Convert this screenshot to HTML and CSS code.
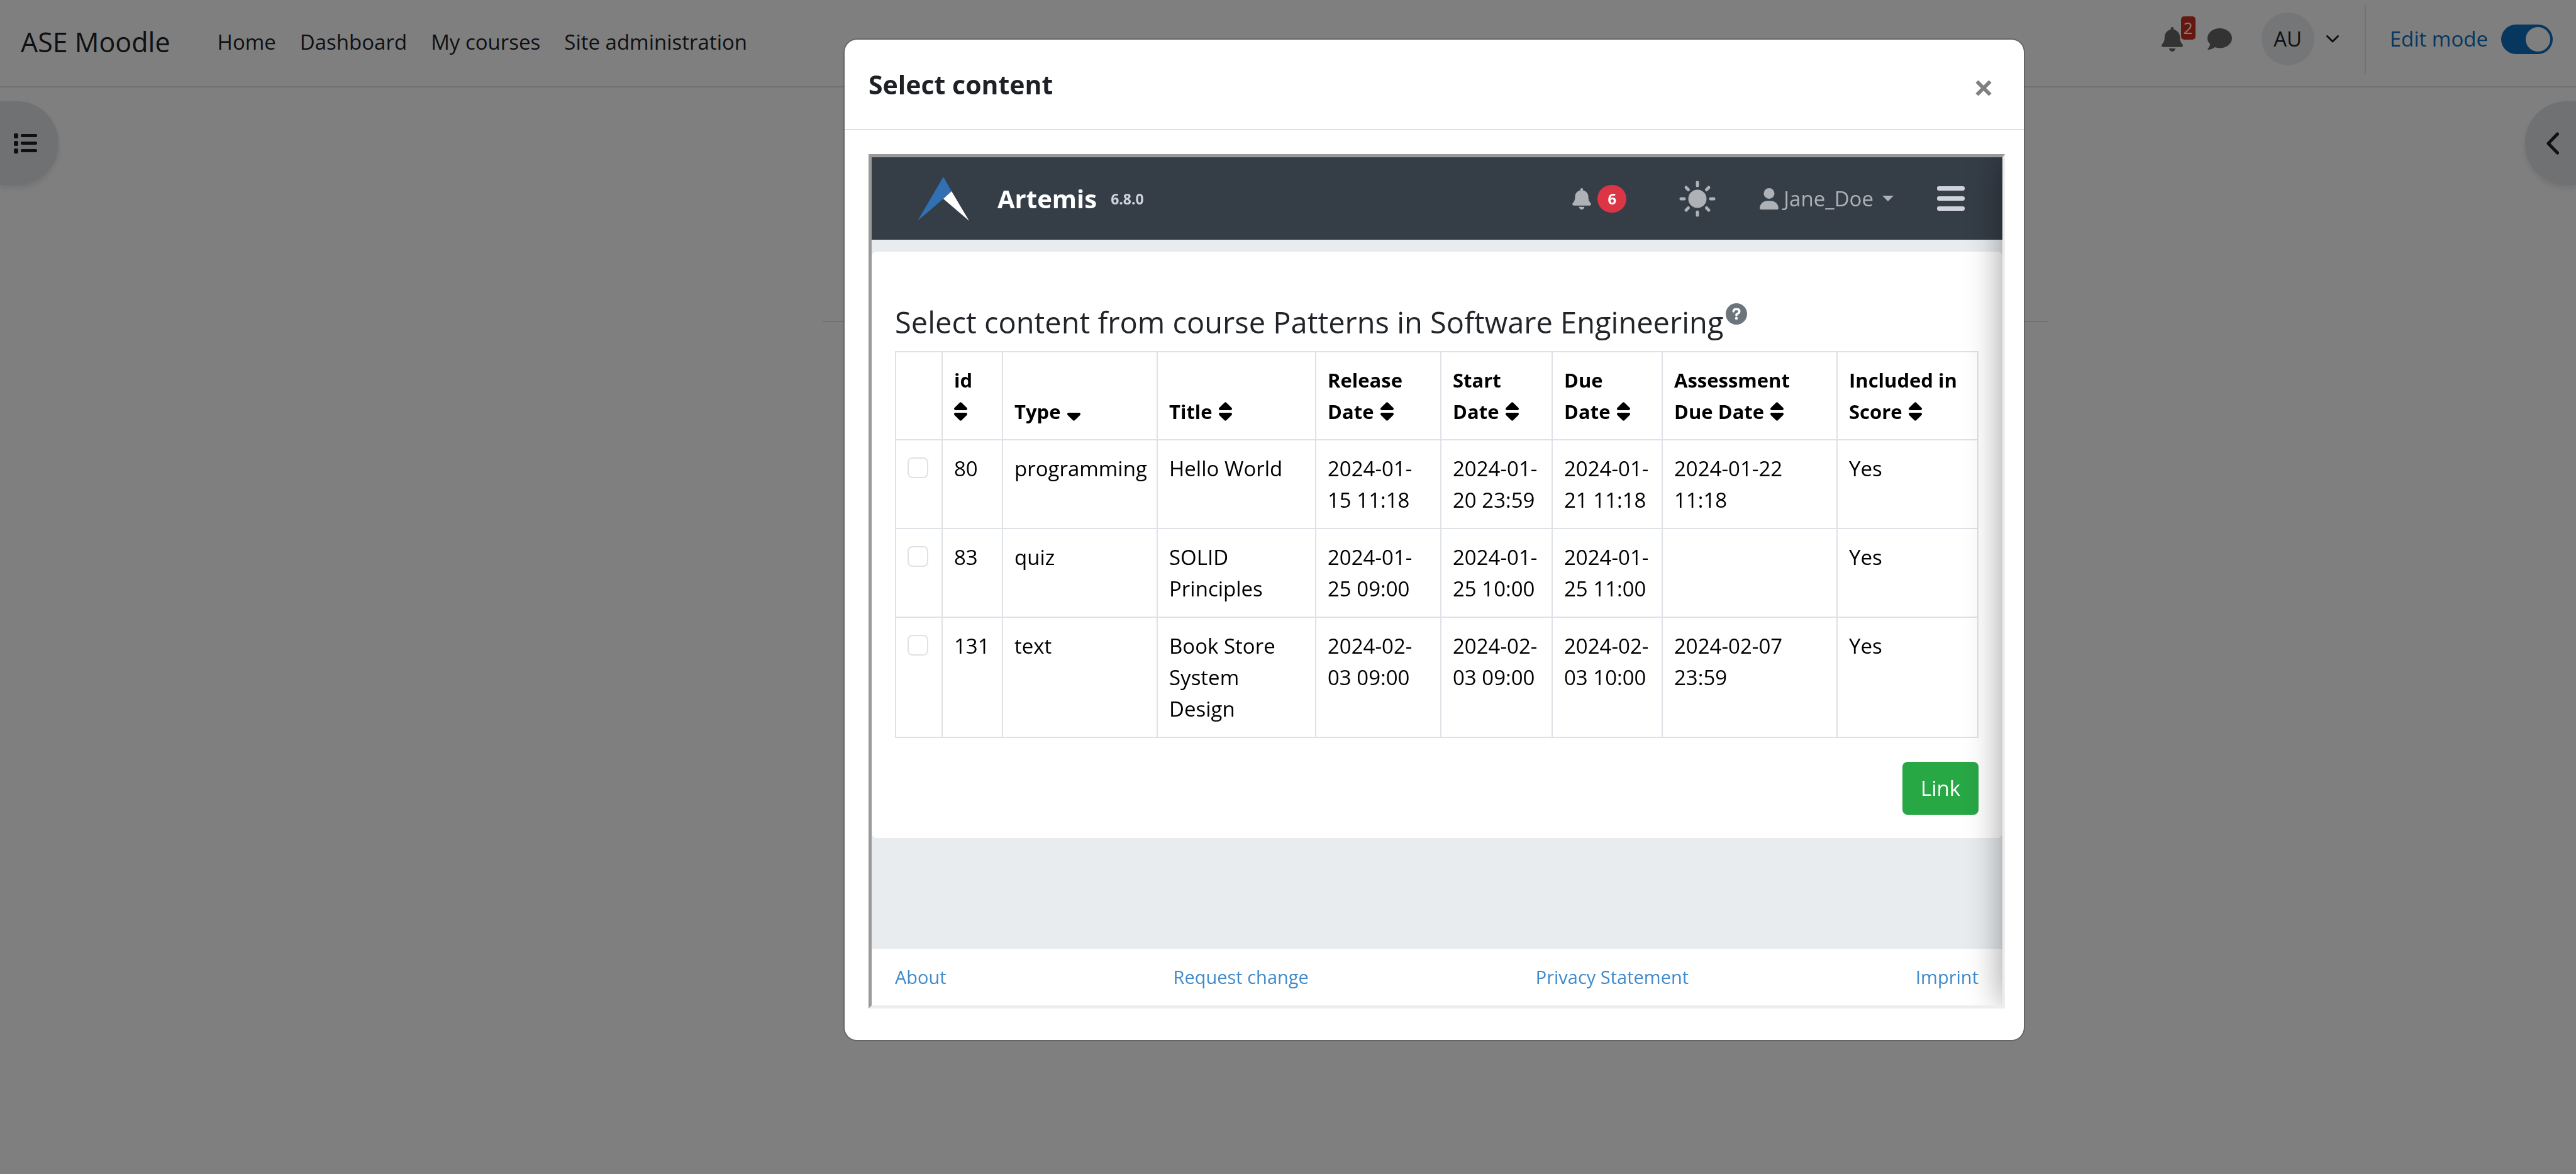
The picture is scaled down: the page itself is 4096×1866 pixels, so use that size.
FILE: index.html
```html
<!DOCTYPE html>
<html lang="en">
<head>
<meta charset="utf-8">
<title>ASE Moodle</title>
<meta name="viewport" content="width=device-width, initial-scale=1">
<link rel="stylesheet" href="styles.css">
</head>
<body>
<svg width="0" height="0" class="sprite" aria-hidden="true">
  <symbol id="sort" viewBox="0 0 320 512"><path d="M137.4 41.4c12.5-12.5 32.8-12.5 45.3 0l128 128c9.2 9.2 11.9 22.9 6.9 34.9s-16.6 19.8-29.6 19.8H32c-12.9 0-24.6-7.8-29.6-19.8s-2.2-25.7 6.9-34.9l128-128zm0 429.3l-128-128c-9.2-9.2-11.9-22.9-6.9-34.9s16.6-19.8 29.6-19.8H288c12.9 0 24.6 7.8 29.6 19.8s2.2 25.7-6.9 34.9l-128 128c-12.5 12.5-32.8 12.5-45.3 0z"/></symbol>
  <symbol id="sort-down" viewBox="0 0 320 512"><path d="M137.4 470.7l-128-128c-9.2-9.2-11.9-22.9-6.9-34.9s16.6-19.8 29.6-19.8H288c12.9 0 24.6 7.8 29.6 19.8s2.2 25.7-6.9 34.9l-128 128c-12.5 12.5-32.8 12.5-45.3 0z"/></symbol>
  <symbol id="bell" viewBox="0 0 448 512"><path d="M224 0c-17.7 0-32 14.300-32 32v19.200C119 66 64 130.600 64 208v18.800c0 47-17.300 92.400-48.500 127.600l-7.400 8.300c-8.400 9.400-10.400 22.900-5.300 34.400S19.400 416 32 416h384c12.600 0 24-7.400 29.200-18.900s3.100-25-5.300-34.400l-7.400-8.300C401.300 319.200 384 273.900 384 226.800V208c0-77.400-55-142-128-156.800V32c0-17.700-14.300-32-32-32zm45.300 493.300c12-12 18.700-28.300 18.700-45.300H160c0 17 6.700 33.300 18.700 45.300S207 512 224 512s33.300-6.700 45.300-18.700z"/></symbol>
</svg>

<header class="topbar">
  <div class="topbar-left">
    <a class="site-name" href="#">ASE Moodle</a>
    <nav class="site-nav">
      <a href="#">Home</a>
      <a href="#">Dashboard</a>
      <a href="#">My courses</a>
      <a href="#">Site administration</a>
    </nav>
  </div>
  <div class="topbar-right">
    <button class="icon-button alerts" type="button" aria-label="Notifications">
      <svg width="34" height="39"><use href="#bell"/></svg>
      <span class="count">2</span>
    </button>
    <button class="icon-button messages" type="button" aria-label="Messages">
      <svg width="39" height="34" viewBox="0 0 39 34"><path d="M19.500 0C30.300 0 39 7 39 15.800S30.300 31.500 19.500 31.500c-2.800 0-5.500-.5-7.900-1.400C9 32.200 5.500 33.800 1.200 34 .2 34 0 33.200.6 32.500 2.400 30.500 3.900 28 4.200 25.300 1.600 22.700 0 19.400 0 15.800 0 7 8.700 0 19.500 0z"/></svg>
    </button>
    <button class="icon-button user" type="button" aria-label="User menu">
      <span class="avatar">AU</span>
      <svg width="20" height="12" viewBox="0 0 20 12"><path class="stroke" d="M1.500 1.500L10 10l8.500-8.500"/></svg>
    </button>
    <label class="edit-mode">Edit mode <input class="switch" type="checkbox" checked></label>
  </div>
</header>

<main class="page">
  <button class="drawer drawer-left" type="button" aria-label="Open course index">
    <svg width="37" height="32" viewBox="0 0 37 32"><g><rect x="0" y="0" width="7" height="8" rx="2"/><rect x="0" y="12" width="7" height="8" rx="2"/><rect x="0" y="24" width="7" height="8" rx="2"/><rect x="11" y="1" width="26" height="5" rx="2"/><rect x="11" y="13" width="26" height="5" rx="2"/><rect x="11" y="25" width="26" height="5" rx="2"/></g></svg>
  </button>
  <div class="region"><div class="region-main"></div></div>
  <button class="drawer drawer-right" type="button" aria-label="Open block drawer">
    <svg width="20" height="36" viewBox="0 0 20 36"><path class="stroke-wide" d="M17.500 3L3 18l14.500 15"/></svg>
  </button>
</main>

<div class="backdrop">
  <section class="modal" role="dialog" aria-labelledby="modal-title">
    <header class="modal-header">
      <h1 id="modal-title">Select content</h1>
      <button class="close" type="button" aria-label="Close">
        <svg width="26" height="26" viewBox="0 0 26 26"><path d="M2.500 2.500l21 21M23.500 2.500l-21 21"/></svg>
      </button>
    </header>
    <div class="modal-body">
      <div class="frame">
        <nav class="app-nav">
          <a class="brand" href="#">
            <svg width="82" height="70" viewBox="0 0 82 70"><path fill="#3070b3" d="M41 0L54 23 41 35 0 70z"/><path fill="#fff" d="M54 23L41 35 82 70z"/></svg>
            <span class="brand-name">Artemis</span>
            <span class="version">6.8.0</span>
          </a>
          <div class="app-tools">
            <button class="tool notifications" type="button" aria-label="Notifications">
              <svg width="30" height="34"><use href="#bell"/></svg>
              <span class="pill">6</span>
            </button>
            <button class="tool theme" type="button" aria-label="Switch theme">
              <svg width="58" height="58" viewBox="-29 -29 58 58"><circle r="14.500"/><g class="rays"><path d="M0-26v5M0 26v-5M-26 0h5M26 0h-5M-18 -18l3.500 3.500M18 18l-3.500-3.500M-18 18l3.500-3.500M18-18l-3.500 3.500"/></g></svg>
            </button>
            <button class="tool account" type="button">
              <svg width="30" height="34" viewBox="0 0 448 512"><path d="M224 256a128 128 0 1 0 0-256 128 128 0 1 0 0 256zm-45.700 48C79.800 304 0 383.800 0 482.300 0 498.700 13.300 512 29.700 512h388.600c16.400 0 29.700-13.300 29.700-29.700C448 383.800 368.200 304 269.700 304h-91.400z"/></svg>
              <span>Jane_Doe</span>
              <svg class="caret" width="18" height="9" viewBox="0 0 18 9"><path d="M0 0h18L9 9z"/></svg>
            </button>
            <button class="tool menu" type="button" aria-label="Menu">
              <svg width="44" height="39" viewBox="0 0 44 39"><rect width="44" height="7" rx="3"/><rect y="16" width="44" height="7" rx="3"/><rect y="32" width="44" height="7" rx="3"/></svg>
            </button>
          </div>
        </nav>

        <div class="card">
          <h2>Select content from course Patterns in Software Engineering
            <svg width="34" height="34" viewBox="0 0 34 34"><circle cx="17" cy="17" r="17" fill="#6c757d"/><path fill="none" stroke="#fff" stroke-width="3.400" stroke-linecap="round" stroke-linejoin="round" d="M12.300 13c0-2.300 1.500-3.500 3.400-3.500h2.300c2.300 0 3.800 1.400 3.800 3.400 0 2.700-2.500 3.300-4.800 4.800v1.600"/><circle cx="17" cy="24" r="2.200" fill="#fff"/></svg>
          </h2>
          <table>
            <colgroup><col class="w-check"><col class="w-id"><col class="w-type"><col class="w-title"><col class="w-release"><col class="w-start"><col class="w-due"><col class="w-assess"><col class="w-score"></colgroup>
            <thead>
              <tr>
                <th></th>
                <th>id <svg class="sort-first"><use href="#sort"/></svg></th>
                <th>Type <svg><use href="#sort-down"/></svg></th>
                <th>Title <svg><use href="#sort"/></svg></th>
                <th>Release Date <svg><use href="#sort"/></svg></th>
                <th>Start Date <svg><use href="#sort"/></svg></th>
                <th>Due Date <svg><use href="#sort"/></svg></th>
                <th>Assessment Due Date <svg><use href="#sort"/></svg></th>
                <th>Included in Score <svg><use href="#sort"/></svg></th>
              </tr>
            </thead>
            <tbody>
              <tr>
                <td><input type="checkbox" aria-label="Select Hello World"></td>
                <td>80</td><td>programming</td><td>Hello World</td>
                <td>2024-01-<wbr>15 11:18</td><td>2024-01-<wbr>20 23:59</td><td>2024-01-<wbr>21 11:18</td><td>2024-01-22 11:18</td><td>Yes</td>
              </tr>
              <tr>
                <td><input type="checkbox" aria-label="Select SOLID Principles"></td>
                <td>83</td><td>quiz</td><td>SOLID Principles</td>
                <td>2024-01-<wbr>25 09:00</td><td>2024-01-<wbr>25 10:00</td><td>2024-01-<wbr>25 11:00</td><td></td><td>Yes</td>
              </tr>
              <tr>
                <td><input type="checkbox" aria-label="Select Book Store System Design"></td>
                <td>131</td><td>text</td><td>Book Store System Design</td>
                <td>2024-02-<wbr>03 09:00</td><td>2024-02-<wbr>03 09:00</td><td>2024-02-<wbr>03 10:00</td><td>2024-02-07 23:59</td><td>Yes</td>
              </tr>
            </tbody>
          </table>
          <button class="link-button" type="button">Link</button>
        </div>

        <footer class="app-footer">
          <a href="#">About</a>
          <a href="#">Request change</a>
          <a href="#">Privacy Statement</a>
          <a href="#">Imprint</a>
        </footer>
        <div class="side-shadow"></div>
      </div>
    </div>
  </section>
</div>
</body>
</html>
```

FILE: styles.css
```css
* { box-sizing: border-box; }

body {
  margin: 0;
  min-height: 100vh;
  background: #fff;
  color: #1d2125;
  font-family: "Open Sans", "Noto Sans", sans-serif;
  font-size: 33px;
  line-height: 50px;
}

a { color: inherit; text-decoration: none; }
button { margin: 0; padding: 0; border: 0; background: none; color: inherit; font: inherit; }
svg { display: block; flex: none; }
.sprite { position: absolute; }

/* Site header */
.topbar {
  display: flex;
  justify-content: space-between;
  height: 139px;
  padding: 0 37px 0 33px;
  border-bottom: 2px solid #dee2e6;
}
.topbar-left { display: flex; align-items: center; padding-bottom: 4px; }
.site-name { margin-right: 75px; font-size: 43px; }
.site-nav { display: flex; gap: 38px; }
.topbar-right { display: flex; align-items: center; padding-bottom: 13px; }
.icon-button { display: flex; align-items: center; position: relative; fill: #666; }
.alerts { margin-right: 39px; }
.messages { margin-right: 47px; }
.count {
  position: absolute;
  top: -17px;
  left: 31px;
  width: 23px;
  height: 37px;
  border-radius: 5px;
  background: #ca3120;
  color: #fff;
  font-size: 26px;
  line-height: 37px;
  text-align: center;
}
.user { gap: 19px; margin-right: 41px; }
.avatar {
  width: 84px;
  height: 84px;
  border-radius: 50%;
  background: #e9ecef;
  line-height: 84px;
  text-align: center;
}
.stroke, .stroke-wide { fill: none; stroke: #1d2125; stroke-linecap: round; stroke-linejoin: round; }
.stroke { stroke-width: 3; }
.stroke-wide { stroke-width: 5; }
.edit-mode {
  display: flex;
  align-items: center;
  gap: 21px;
  height: 110px;
  padding-left: 38px;
  border-left: 2px solid #dee2e6;
  color: #0f6cbf;
}
.switch {
  appearance: none;
  display: flex;
  justify-content: flex-end;
  width: 82px;
  height: 47px;
  margin: 0;
  padding: 4px;
  border-radius: 24px;
  background: #0f6cbf;
}
.switch::before { content: ""; width: 39px; height: 39px; border-radius: 50%; background: #fff; }

/* Page behind the dialog */
.page { display: flex; align-items: flex-start; padding-top: 22px; }
.drawer {
  display: flex;
  align-items: center;
  height: 133px;
  background: #dee2e6;
  fill: #1d2125;
  box-shadow: 0 5px 10px rgba(0, 0, 0, .1);
}
.drawer-left { width: 93px; padding-left: 22px; border-radius: 0 66px 66px 0; }
.drawer-right { width: 81px; padding-left: 34px; border-radius: 66px 0 0 66px; }
.region { display: flex; flex: 1; justify-content: center; padding-left: 455px; }
.region-main { width: 100%; max-width: 1948px; height: 351px; border-bottom: 2px solid #dee2e6; }

/* Dialog */
.backdrop {
  position: fixed;
  inset: 0;
  display: flex;
  align-items: flex-start;
  justify-content: center;
  padding: 63px 0 0 465px;
  background: rgba(0, 0, 0, .5);
}
.modal {
  width: 100%;
  max-width: 1875px;
  border-radius: 20px;
  background: #fff;
  box-shadow: 0 0 0 2px rgba(0, 0, 0, .2);
}
.modal-header {
  display: flex;
  align-items: center;
  justify-content: space-between;
  height: 144px;
  padding: 0 51px 0 38px;
  border-bottom: 2px solid #dee2e6;
}
.modal-header h1 { margin: 0; font-size: 41px; }
.close { padding-top: 12px; }
.close svg { fill: none; stroke: #808080; stroke-width: 6; }
.modal-body { padding: 38px 30px 50px 38px; }

/* Embedded application */
.frame {
  position: relative;
  overflow: hidden;
  border: solid;
  border-width: 5px 4px 5px 5px;
  border-color: #9a9a9a #ededed #ededed #9a9a9a;
  background: #e8ecef;
}
.app-nav {
  display: flex;
  align-items: center;
  justify-content: space-between;
  height: 131px;
  margin-bottom: 19px;
  padding: 0 60px 0 73px;
  background: #353d47;
}
.brand { display: flex; align-items: center; }
.brand-name { margin: 0 22px 0 45px; color: #fff; font-size: 40px; font-weight: 700; }
.version { color: #cfd4dc; font-size: 23px; font-weight: 700; }
.app-tools { display: flex; align-items: center; }
.tool { display: flex; align-items: center; color: #aeb1b5; fill: #aeb1b5; }
.notifications { gap: 10px; margin-right: 84px; }
.pill {
  width: 46px;
  height: 44px;
  border-radius: 23px;
  background: #dc3545;
  color: #fff;
  font-size: 24px;
  font-weight: 700;
  line-height: 44px;
}
.theme { margin-right: 70px; }
.rays { fill: none; stroke: #aeb1b5; stroke-width: 5; stroke-linecap: round; }
.account { gap: 8px; margin-right: 69px; }
.caret { margin-left: 6px; }
.menu { fill: #cfd4dc; }

.card { display: flow-root; padding: 82px 38px 37px 37px; border-radius: 8px; background: #fff; }
.card h2 {
  display: flex;
  gap: 4px;
  margin: 0 0 16px;
  color: #212529;
  font-size: 47px;
  font-weight: 400;
  line-height: 60px;
}

table { width: 100%; table-layout: fixed; border-collapse: collapse; color: #000; }
.w-check { width: 74px; }
.w-id { width: 96px; }
.w-type { width: 246px; }
.w-title { width: 252px; }
.w-release { width: 199px; }
.w-start { width: 177px; }
.w-due { width: 175px; }
.w-assess { width: 278px; }
th, td { border: 2px solid #dee2e6; text-align: left; }
th { padding: 19px 18px; font-size: 31px; vertical-align: bottom; }
td { padding: 20px 18px 19px; vertical-align: top; }
th svg { display: inline-block; width: 21px; height: 34px; margin-left: 2px; vertical-align: -5px; }
th .sort-first { margin-left: 0; }
td input {
  appearance: none;
  display: block;
  width: 33px;
  height: 33px;
  margin: 7px 0 0;
  border: 2px solid #dee2e6;
  border-radius: 8px;
  background: #fff;
}

.link-button {
  display: block;
  width: 121px;
  height: 84px;
  margin: 38px 0 0 auto;
  border-radius: 8px;
  background: #28a745;
  color: #fff;
}

.app-footer {
  display: flex;
  align-items: center;
  justify-content: space-between;
  height: 90px;
  margin-top: 176px;
  padding: 0 38px 0 37px;
  background: #fff;
  color: #3e8acc;
  font-size: 29px;
}

/* Edge of the collapsed side menu */
.side-shadow {
  position: absolute;
  top: 0;
  bottom: 2px;
  left: 100%;
  width: 100px;
  box-shadow: 0 0 56px rgba(0, 0, 0, .4);
}
```
